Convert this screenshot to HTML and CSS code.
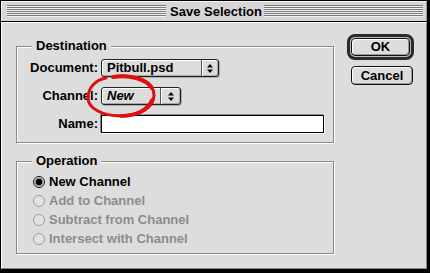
FILE: index.html
```html
<!DOCTYPE html>
<html>
<head>
<meta charset="utf-8">
<title>Save Selection</title>
<link rel="stylesheet" href="styles.css">
</head>
<body>
<div class="window">
  <div class="titlebar">
    <div class="stripes"></div>
    <span class="title">Save Selection</span>
    <div class="stripes"></div>
  </div>
  <div class="separator"></div>
  <div class="content">
    <div class="groups">
      <div class="group dest">
        <div class="legend">Destination</div>
        <div class="form">
          <span class="lbl">Document:</span>
          <div class="popup doc">
            <span class="popup-text">Pitbull.psd</span>
            <span class="popup-arrow"><svg width="6" height="9" viewBox="0 0 6 9"><path d="M3 0 L6 3.5 L0 3.5 Z M0 5.5 L6 5.5 L3 9 Z" fill="#000"/></svg></span>
          </div>
          <span class="lbl">Channel:</span>
          <div class="popup chan">
            <span class="popup-text italic">New</span>
            <span class="popup-arrow"><svg width="6" height="9" viewBox="0 0 6 9"><path d="M3 0 L6 3.5 L0 3.5 Z M0 5.5 L6 5.5 L3 9 Z" fill="#000"/></svg></span>
          </div>
          <span class="lbl">Name:</span>
          <div class="field"></div>
        </div>
      </div>
      <div class="group op">
        <div class="legend">Operation</div>
        <ul class="radios">
          <li class="radio on"><span class="circle"></span>New Channel</li>
          <li class="radio off"><span class="circle"></span>Add to Channel</li>
          <li class="radio off"><span class="circle"></span>Subtract from Channel</li>
          <li class="radio off"><span class="circle"></span>Intersect with Channel</li>
        </ul>
      </div>
    </div>
    <div class="buttons">
      <div class="default-ring"><div class="btn ok">OK</div></div>
      <div class="btn cancel">Cancel</div>
    </div>
    <svg class="annotation" width="76" height="50" viewBox="0 0 76 50">
      <path d="M31 6.5 C50 4, 70 12, 70 25 C70 38, 55 46, 37 46 C18 46, 4 38, 4 28 C4 18, 11 10, 22 8" fill="none" stroke="#e00e0e" stroke-width="3" stroke-linecap="round"/>
      <path d="M29 7 C45 4.5, 62 8.5, 68 18" fill="none" stroke="#e00e0e" stroke-width="4.2" stroke-linecap="round"/>
      <path d="M68 30 C64 40, 52 45.5, 37 46" fill="none" stroke="#e00e0e" stroke-width="3.6" stroke-linecap="round"/>
    </svg>
  </div>
</div>
</body>
</html>
```
FILE: styles.css
```css
* { box-sizing: border-box; }

html, body {
  margin: 0;
  padding: 0;
}

body {
  width: 430px;
  height: 273px;
  overflow: hidden;
  background: #000;
  font-family: "Liberation Sans", Arial, sans-serif;
  font-size: 13px;
  font-weight: bold;
  color: #000;
}

.window {
  width: 426px;
  height: 268px;
  margin: 1px 0 0 1px;
  background: #dddddd;
  display: flex;
  flex-direction: column;
}

.titlebar {
  height: 20px;
  display: flex;
  align-items: flex-start;
  padding: 3px 3px 0 5px;
  background: #d6d6d6;
  border-top: 1px solid #f4f4f4;
  border-left: 1px solid #f4f4f4;
  border-right: 1px solid #999;
}

.stripes {
  flex: 1;
  height: 12px;
  background: repeating-linear-gradient(to bottom, #7a7a7a 0 1px, #f2f2f2 1px 2px);
}

.title {
  line-height: 15px;
  margin-top: -1px;
  padding: 0 2px 0 4px;
}

.separator {
  height: 1px;
  background: #000;
}

.content {
  position: relative;
  flex: 1;
  display: flex;
  align-items: flex-start;
  padding: 11px 0 0 14px;
  border-top: 1px solid #fff;
  border-left: 1px solid #fff;
  border-right: 1px solid #888;
  border-bottom: 1px solid #888;
}

.groups {
  width: 318px;
  margin-top: 12px;
  display: flex;
  flex-direction: column;
  gap: 18px;
}

.group {
  border: 1px solid #888;
  box-shadow: 1px 1px 0 #fff, inset 1px 1px 0 #fff;
}

.legend {
  width: fit-content;
  margin: -9px 0 0 15px;
  padding: 0 4px;
  line-height: 15px;
  background: #dddddd;
}

.dest { padding-bottom: 9px; }
.op { padding-bottom: 5px; }

.form {
  margin-top: 6px;
  display: grid;
  grid-template-columns: 81px auto;
  column-gap: 3px;
  row-gap: 10px;
  align-items: center;
  justify-items: start;
}

.lbl {
  justify-self: end;
  line-height: 16px;
}

.popup {
  height: 18px;
  display: flex;
  border: 1px solid #222;
  border-radius: 3px;
  background: #dcdcdc;
  box-shadow: inset 1px 1px 0 #fff, inset -1px -1px 0 #a8a8a8, 1px 1px 0 #aaa;
}

.popup.doc { width: 118px; }
.popup.chan { width: 80px; }

.popup-text {
  flex: 1;
  padding-left: 5px;
  line-height: 16px;
}

.italic { font-style: italic; }

.popup-arrow {
  display: flex;
  align-items: center;
  justify-content: center;
  border-left: 1px solid #555;
  box-shadow: inset 1px 0 0 #fff;
}

.popup.doc .popup-arrow { width: 17px; }
.popup.chan .popup-arrow { width: 20px; }

.field {
  width: 223px;
  height: 18px;
  background: #fff;
  border: 1px solid #000;
  box-shadow: -1px -1px 0 #8a8a8a, 1px 1px 0 #fff;
}

.radios {
  list-style: none;
  margin: 4px 0 0 0;
  padding: 0 0 0 16px;
}

.radio {
  height: 19px;
  display: flex;
  align-items: center;
  gap: 4px;
  line-height: 16px;
}

.radio.off { color: #8c8c8c; }

.circle {
  width: 12px;
  height: 12px;
  border-radius: 50%;
}

.radio.on .circle {
  border: 1px solid #111;
  background: radial-gradient(circle, #000 0 3px, #9a9a9a 3.6px, #e6e6e6 5px);
}

.radio.off .circle {
  border: 1px solid #9c9c9c;
  background: #e2e2e2;
}

.buttons {
  margin-left: 13px;
  display: flex;
  flex-direction: column;
}

.default-ring {
  width: 67px;
  height: 26px;
  padding: 1px;
  border: 3px solid #2a2a2a;
  border-radius: 8px;
  box-shadow: inset 0 0 0 1px #bbb;
}

.btn {
  height: 18px;
  border: 1px solid #111;
  border-radius: 4px;
  background: #dddddd;
  box-shadow: inset 1px 1px 0 #fff, inset -1px -1px 0 #999;
  text-align: center;
  line-height: 16px;
}

.btn.cancel {
  width: 62px;
  height: 19px;
  line-height: 17px;
  margin: 6px 0 0 4px;
}

.annotation {
  position: absolute;
  left: 82px;
  top: 47px;
}
```
